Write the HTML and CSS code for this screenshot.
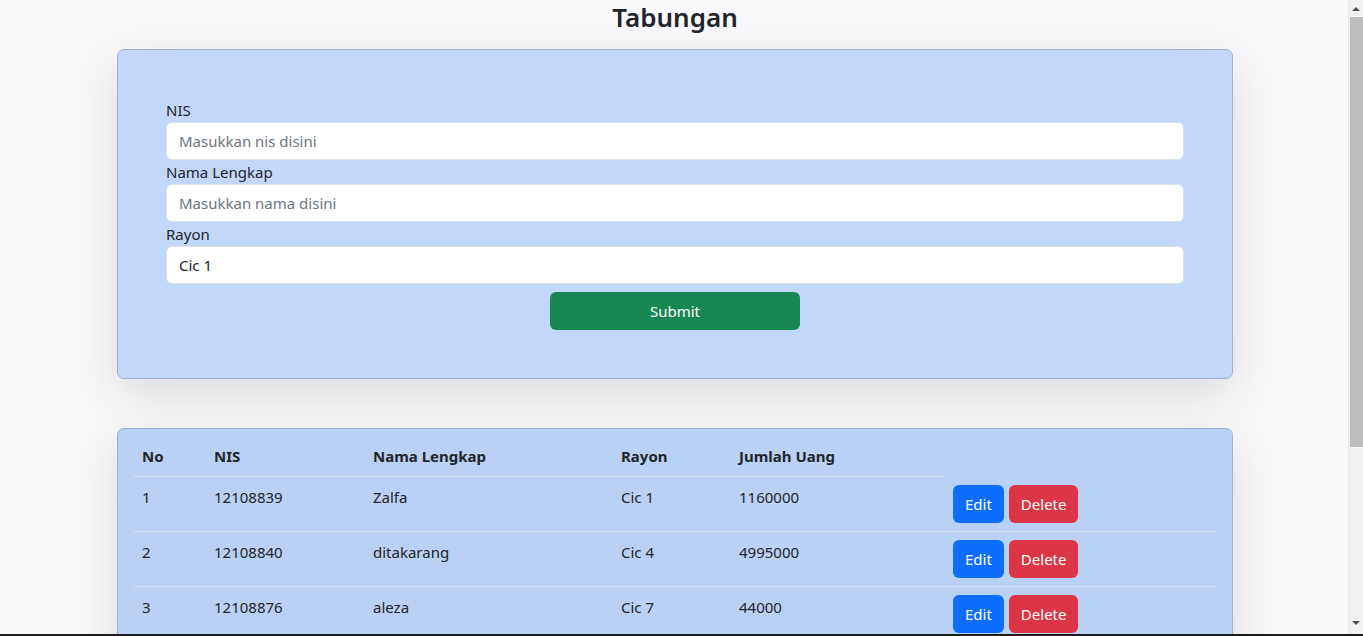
FILE: index.html
```html
<!DOCTYPE html>
<html lang="id">
<head>
<meta charset="utf-8">
<title>Tabungan</title>
<link rel="stylesheet" href="styles.css">
</head>
<body>
<div class="page">
  <div class="container">
    <h2 class="title">Tabungan</h2>

    <div class="card form-card">
      <form class="form">
        <label class="label" for="nis">NIS</label>
        <input class="input" id="nis" type="text" placeholder="Masukkan nis disini">
        <label class="label" for="nama">Nama Lengkap</label>
        <input class="input" id="nama" type="text" placeholder="Masukkan nama disini">
        <label class="label" for="rayon">Rayon</label>
        <input class="input" id="rayon" type="text" value="Cic 1">
        <div class="submit-row">
          <button class="btn btn-submit" type="button">Submit</button>
        </div>
      </form>
    </div>

    <div class="card table-card">
      <table class="table">
        <thead>
          <tr>
            <th class="c-no">No</th>
            <th class="c-nis">NIS</th>
            <th class="c-nama">Nama Lengkap</th>
            <th class="c-rayon">Rayon</th>
            <th class="c-jml">Jumlah Uang</th>
          </tr>
        </thead>
        <tbody>
          <tr>
            <td>1</td>
            <td>12108839</td>
            <td>Zalfa</td>
            <td>Cic 1</td>
            <td>1160000</td>
            <td><div class="actions"><button class="btn btn-edit" type="button">Edit</button><button class="btn btn-delete" type="button">Delete</button></div></td>
          </tr>
          <tr>
            <td>2</td>
            <td>12108840</td>
            <td>ditakarang</td>
            <td>Cic 4</td>
            <td>4995000</td>
            <td><div class="actions"><button class="btn btn-edit" type="button">Edit</button><button class="btn btn-delete" type="button">Delete</button></div></td>
          </tr>
          <tr>
            <td>3</td>
            <td>12108876</td>
            <td>aleza</td>
            <td>Cic 7</td>
            <td>44000</td>
            <td><div class="actions"><button class="btn btn-edit" type="button">Edit</button><button class="btn btn-delete" type="button">Delete</button></div></td>
          </tr>
        </tbody>
      </table>
    </div>
  </div>
</div>

<div class="scrollbar" aria-hidden="true">
  <div class="sb-arrow sb-up"></div>
  <div class="sb-track"><div class="sb-thumb"></div></div>
  <div class="sb-arrow sb-down"></div>
</div>
<div class="taskbar-edge"></div>
</body>
</html>
```

FILE: styles.css
```css
* { box-sizing: border-box; }

html, body { background: #f9f9fb; }

body {
  margin: 0;
  color: #212529;
  font-family: "Noto Sans", "Open Sans", "Liberation Sans", sans-serif;
  font-size: 15px;
  line-height: 24px;
}

.page {
  width: calc(100% - 13px);
}

.container {
  width: 1140px;
  margin: 0 auto;
  padding: 0 12px 232px;
}

.title {
  margin: 0 0 15px;
  text-align: center;
  font-size: 26px;
  line-height: 34px;
  font-weight: 600;
  color: #212529;
}

.card {
  border: 1px solid #9db2d2;
  border-radius: 7px;
  box-shadow: 0 1rem 3rem rgba(0, 0, 0, 0.13);
}

.form-card {
  background: #c1d8fb;
  padding: 48px;
}

.form {
  display: flex;
  flex-direction: column;
}

.label {
  display: block;
  line-height: 24px;
}

.input {
  display: block;
  width: 100%;
  height: 38px;
  padding: 6px 12px;
  border: 1px solid #dee2e6;
  border-radius: 6px;
  background: #fff;
  font: inherit;
  color: #212529;
}

.input::placeholder { color: #6c757d; }

.submit-row {
  display: flex;
  justify-content: center;
  margin-top: 8px;
}

.btn {
  height: 38px;
  padding: 6px 12px;
  border: 0;
  border-radius: 6px;
  color: #fff;
  font: inherit;
  line-height: 26px;
}

.btn-submit {
  width: 250px;
  background: #198754;
}

.table-card {
  margin-top: 49px;
  background: #b9d1f4;
  padding: 7px 16px 16px;
}

.table {
  width: 100%;
  border-collapse: collapse;
  table-layout: fixed;
}

.table th,
.table td {
  padding: 8px;
  text-align: left;
  vertical-align: top;
  border-bottom: 1px solid #d7e3f5;
}

.table th { font-weight: 700; }

.c-no { width: 72px; }
.c-nis { width: 159px; }
.c-nama { width: 248px; }
.c-rayon { width: 118px; }
.c-jml { width: 213px; }

.actions {
  display: flex;
  gap: 5px;
  padding-left: 1px;
}

.btn-edit { background: #0d6efd; }
.btn-delete { background: #dc3545; }

/* simulated browser scrollbar */
.scrollbar {
  position: fixed;
  top: 0;
  right: 0;
  bottom: 0;
  width: 15px;
  background: #f1f1f1;
  border-left: 1px solid #e8e8e8;
  display: flex;
  flex-direction: column;
}

.sb-arrow {
  height: 17px;
  flex: none;
  display: flex;
  align-items: center;
  justify-content: center;
}

.sb-arrow::before {
  content: "";
  width: 0;
  height: 0;
  border-left: 4px solid transparent;
  border-right: 4px solid transparent;
}

.sb-up::before { border-bottom: 4px solid #505050; }
.sb-down::before { border-top: 4px solid #505050; }
.sb-down { margin-bottom: 5px; }

.sb-track {
  flex: 1;
}

.sb-thumb {
  height: 430px;
  margin-left: 1px;
  background: #bdbdbd;
}

.taskbar-edge {
  position: fixed;
  left: 0;
  right: 0;
  bottom: 0;
  height: 2px;
  background: #1e1e1e;
  z-index: 2;
}
```
